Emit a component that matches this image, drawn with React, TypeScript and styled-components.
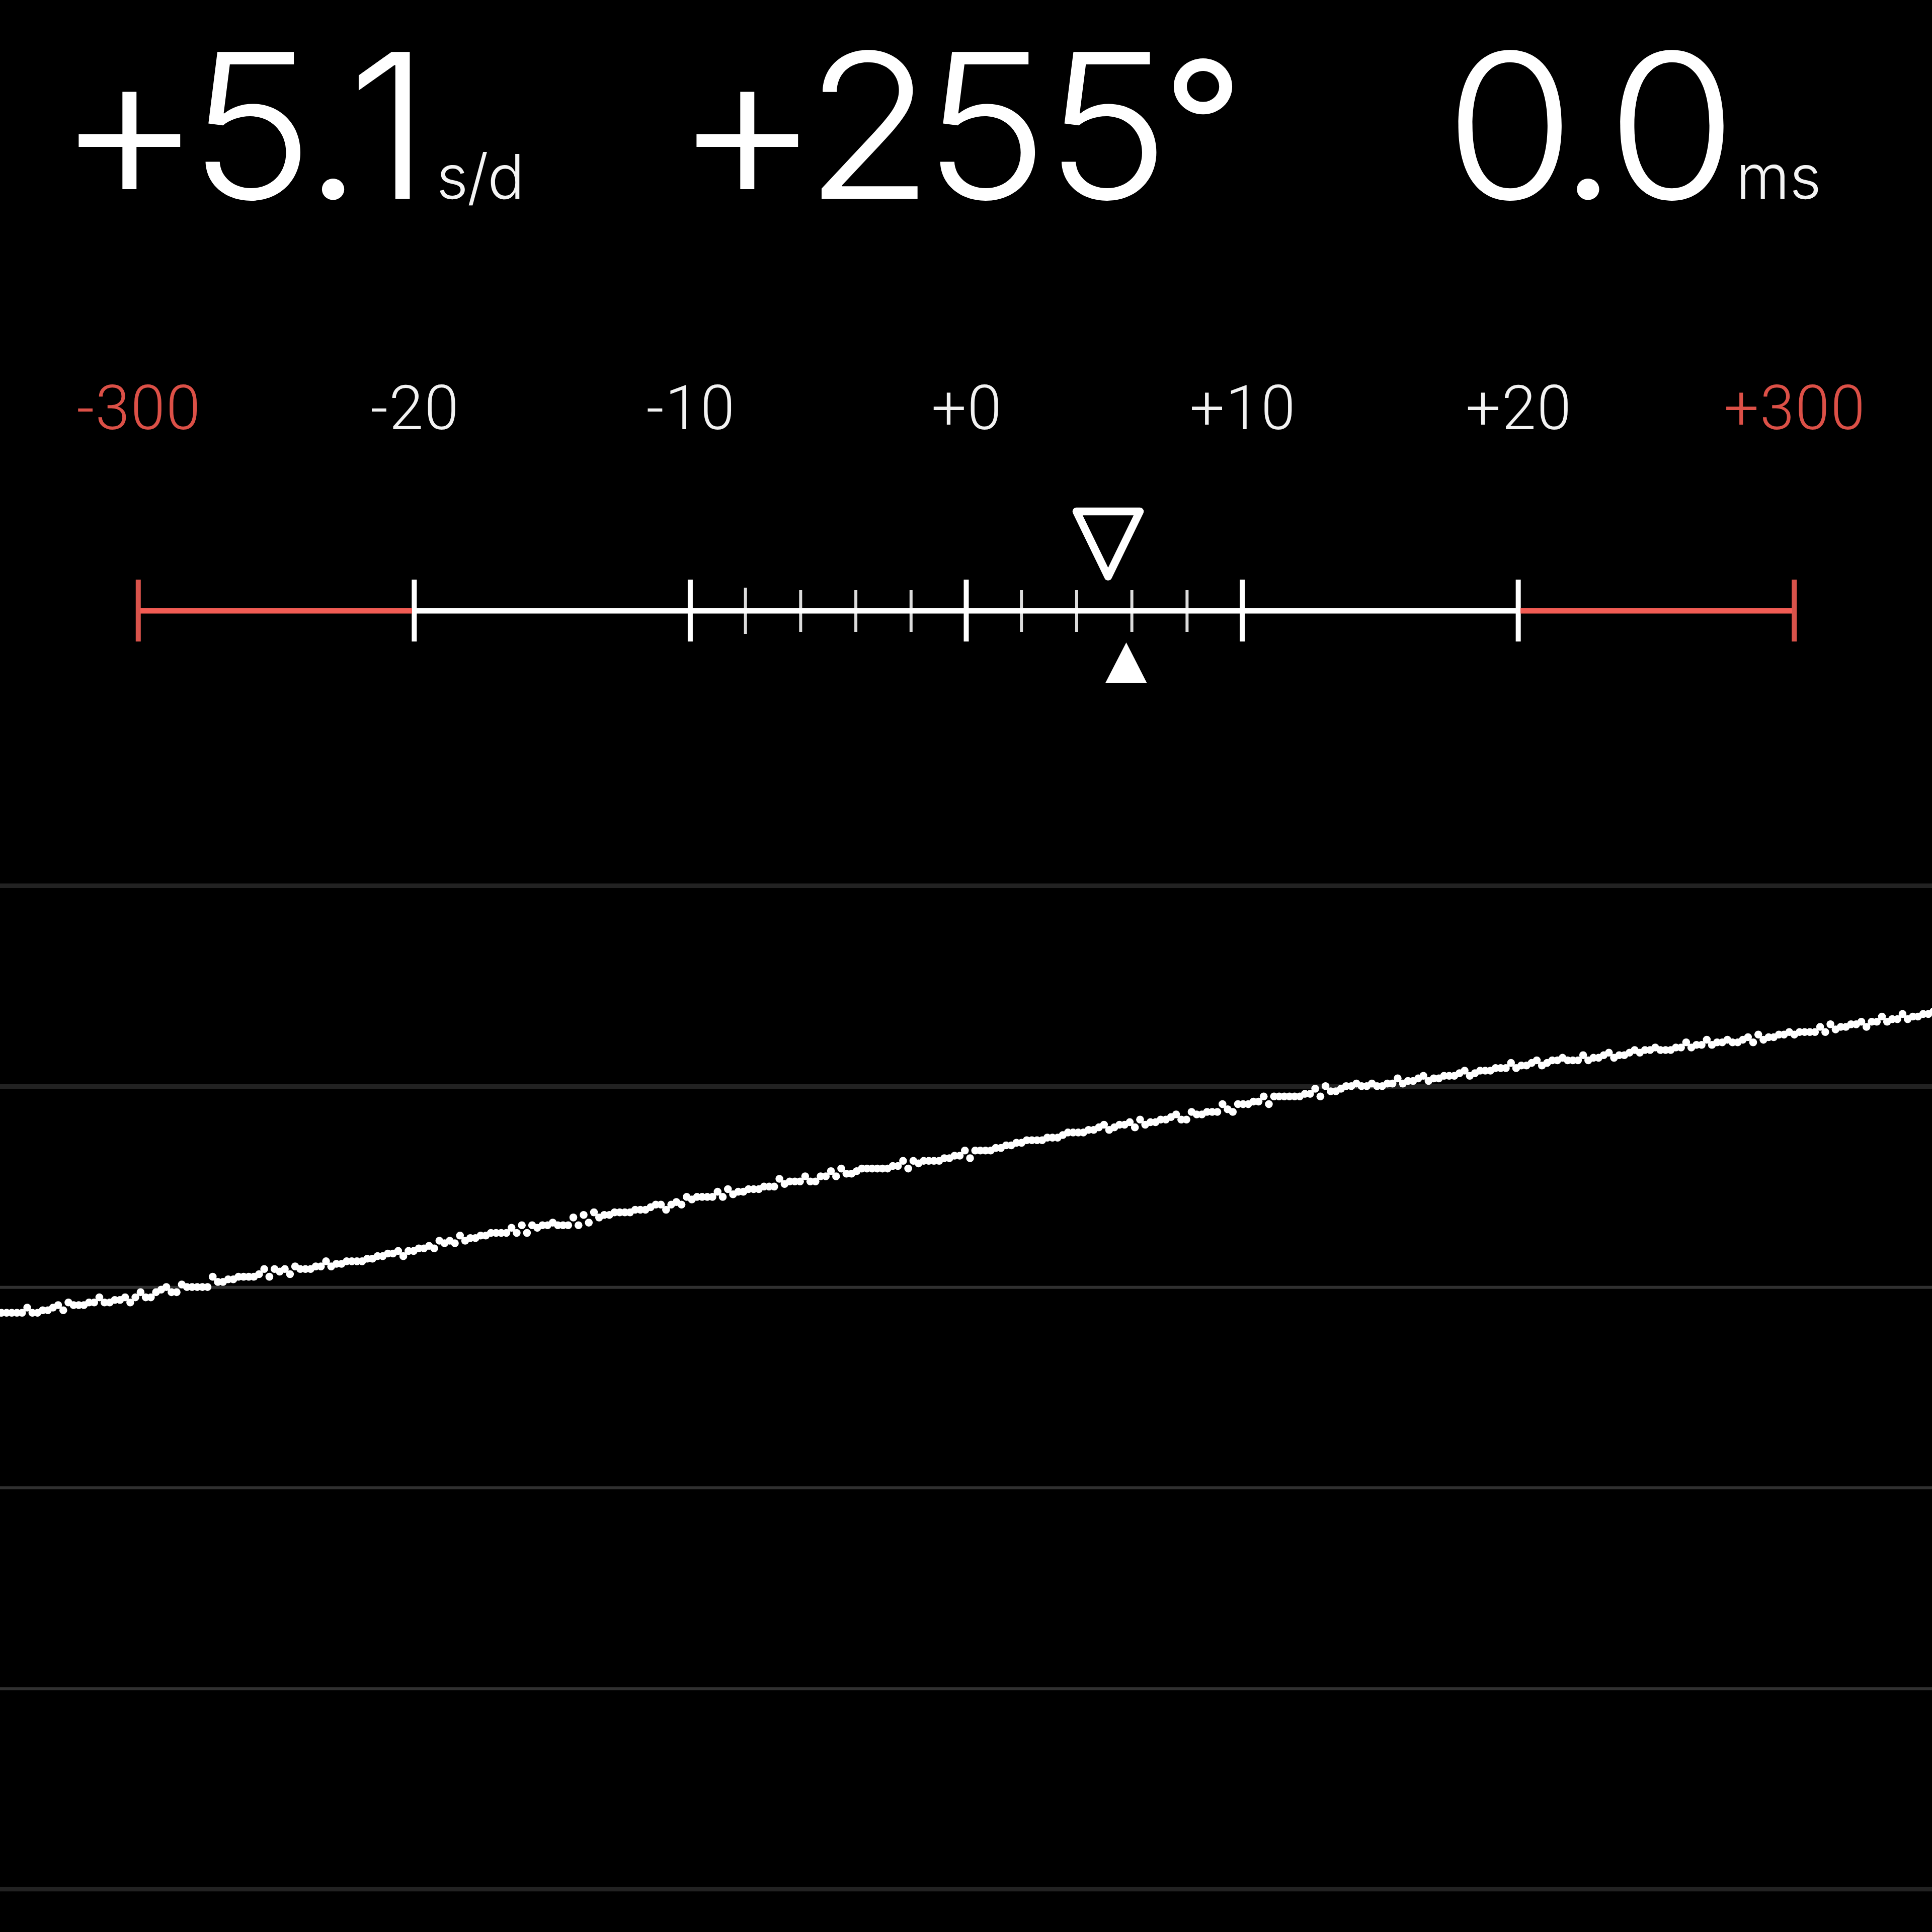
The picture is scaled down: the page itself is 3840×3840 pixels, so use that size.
import React from "react";
import styled, { createGlobalStyle } from "styled-components";

const GlobalStyle = createGlobalStyle`
  html, body { margin: 0; padding: 0; background: #000; }
`;

const Screen = styled.main`
  width: 3840px;
  height: 3840px;
  display: flex;
  flex-direction: column;
  overflow: hidden;
  background: #000;
  color: #fff;
  font-family: Inter, "Liberation Sans", sans-serif;
`;

const Readings = styled.header`
  display: grid;
  grid-template-columns: 1228px 1495px 1fr;
  height: 540px;
  padding: 50px 0 0 130px;
  box-sizing: border-box;
`;

const Reading = styled.div`
  display: flex;
  align-items: baseline;
  line-height: 400px;
  white-space: nowrap;
`;

const Value = styled.div`
  font-size: 401px;
  font-weight: 300;
  font-kerning: none;
  font-feature-settings: "calt" 0;
  transform: scaleX(1.045);
  transform-origin: left center;
`;

const Glyph = styled.span<{ $gap: number; $size: number; $raise: number; $weight: number }>`
  margin-left: ${(p) => p.$gap}px;
  font-size: ${(p) => p.$size}px;
  font-weight: ${(p) => p.$weight};
  line-height: 0;
  vertical-align: ${(p) => p.$raise}px;
`;

const Unit = styled.span<{ $gap: number; $spacing: number }>`
  margin-left: ${(p) => p.$gap}px;
  font-size: 122px;
  font-weight: 325;
  letter-spacing: ${(p) => p.$spacing}px;
  color: #f4f4f4;
`;

const Labels = styled.div`
  display: grid;
  grid-template-columns: repeat(7, 1fr);
  height: 460px;
  padding-top: 201px;
  box-sizing: border-box;
`;

const Label = styled.span<{ $limit?: boolean }>`
  padding-left: 4px;
  font-family: Roboto, "Liberation Sans", sans-serif;
  font-size: 123px;
  font-weight: 300;
  letter-spacing: 2px;
  line-height: 140px;
  text-align: center;
  color: ${(p) => (p.$limit ? "#dc5047" : "#f2f2f2")};
`;

const Drawing = styled.svg`
  display: block;
  flex: none;
`;

const labels = ["-300", "-20", "-10", "+0", "+10", "+20", "+300"];
const STEP = 3840 / 7;
const majors = labels.map((_, i) => STEP * (i + 0.5));
const minors = [-8, -6, -4, -2, 2, 4, 6, 8];

const SAMPLES = [
  0, 0, 0, 0, 0, 2, 0, 0, 1, 1, 2, 3, 1, 4, 3, 3, 3, 4, 4, 6, 4, 4, 5, 5, 6, 4, 6, 8, 6, 6, 8, 9, 10, 8, 8, 11, 10,
  10, 10, 10, 10, 14, 12, 12, 13, 13, 14, 14, 14, 14, 15, 17, 14, 17, 16, 17, 15, 18, 17, 17, 17, 18, 18, 20, 18, 19,
  19, 20, 20, 20, 20, 21, 21, 22, 22, 23, 23, 24, 22, 24, 24, 25, 25, 26, 25, 28, 27, 28, 27, 30, 28, 29, 29, 30,
  30, 31, 31, 31, 31, 33, 31, 34, 31, 34, 33, 34, 34, 35, 34, 34, 34, 37, 34, 38, 35, 39, 37, 38, 38, 39, 39, 39, 39,
  40, 40, 40, 41, 42, 42, 40, 42, 43, 42, 45, 44, 45, 45, 45, 45, 47, 45, 48, 46, 47, 47, 48, 48, 48, 49, 49, 49, 52,
  50, 51, 51, 51, 53, 51, 51, 53, 53, 55, 53, 56, 54, 54, 55, 56, 56, 56, 56, 56, 56, 57, 57, 59, 56, 59, 58, 59, 59,
  59, 59, 60, 60, 61, 61, 63,
  60, 63, 63, 63, 63, 64, 64, 65, 65, 66, 66, 67, 67, 67, 67, 68, 68, 68, 69, 70, 70, 70, 70, 71, 71, 72, 73, 71, 72,
  73, 73, 74, 72, 75, 73, 74, 74, 75, 75, 76, 77, 75, 75, 78, 77, 77, 78, 78, 78, 81, 79, 78, 81, 81, 81, 82, 82, 84,
  81, 84, 84, 84, 84, 84, 84, 85, 85, 87, 84, 88, 86, 86, 87, 88, 88, 89, 88, 88, 89, 88, 88, 89, 89, 91, 89, 90, 90,
  91, 92, 90, 91, 91, 92,
  92, 92, 93, 94, 92, 93, 94, 94, 94, 95, 95, 95, 97, 95, 96, 96, 97, 98, 96, 97, 98, 98, 99, 98, 98, 98, 100, 98, 99,
  99, 100, 101, 99, 100, 100, 101, 102, 101, 102, 102, 103, 102, 102, 102, 103, 103, 105, 103, 104, 104, 106, 104, 105,
  105, 106, 105, 105, 106, 107, 105, 108, 106, 107, 107, 108, 108, 109, 108, 109, 109, 109, 109, 111, 109, 112, 110,
  111, 111, 112, 112, 113, 111, 113, 113, 115, 113, 114, 114, 116, 114, 115, 115, 116, 116, 117,
];

const UNIT = 5.12;
const gridLines = [
  { y: 360.5, soft: true },
  { y: 759.5, soft: true },
  { y: 1158.7, soft: false },
  { y: 1557.2, soft: false },
  { y: 1956.3, soft: false },
  { y: 2354.8, soft: true },
];

type Shape = { size: number; raise: number; weight: number };
const plain: Shape = { size: 401, raise: 0, weight: 325 };
const shapes: Record<string, Shape> = {
  "+": { size: 428, raise: -6, weight: 325 },
  "°": { size: 338, raise: 31, weight: 380 },
};

function Figures({ text, gaps }: { text: string; gaps: number[] }) {
  return (
    <Value>
      {[...text].map((ch, i) => {
        const s = shapes[ch] ?? plain;
        return (
          <Glyph key={i} $gap={gaps[i] ?? 0} $size={s.size} $raise={s.raise} $weight={s.weight}>
            {ch}
          </Glyph>
        );
      })}
    </Value>
  );
}

function Scale() {
  return (
    <Drawing width={3840} height={400} viewBox="0 1000 3840 400">
      {majors.map((x, i) => (
        <rect key={x} x={x - 4.5} y={1152} width={10} height={123} fill={i === 0 || i === 6 ? "#d9534b" : "#fff"} />
      ))}
      {minors.map((m) => (
        <rect
          key={m}
          x={1920 + (m * STEP) / 10 - 2.5}
          y={m === -8 ? 1168 : 1173}
          width={6}
          height={m === -8 ? 92 : 83}
          fill="#dcdcdc"
        />
      ))}
      <rect x={279} y={1208.5} width={540} height={11} fill="#f25c54" />
      <rect x={3022} y={1208.5} width={540} height={11} fill="#f25c54" />
      <rect x={819} y={1208.5} width={2202} height={11} fill="#fff" />
      <path d="M2139.500 1016.500H2265.500L2202.500 1146Z" fill="none" stroke="#fff" strokeWidth={15.5} strokeLinejoin="round" />
      <path d="M2238.500 1277L2279.500 1357.500H2197Z" fill="#fff" />
    </Drawing>
  );
}

function Trace() {
  return (
    <Drawing width={3840} height={2440} viewBox="0 0 3840 2440">
      {gridLines.map((g) => {
        const h = g.soft ? 9 : 6;
        return <rect key={g.y} x={0} y={g.y - h / 2} width={3840} height={h} fill={g.soft ? "#222" : "#303030"} />;
      })}
      <circle cx={-7.3} cy={1214.4} r={7.7} fill="#fff" />
      {SAMPLES.map((n, i) => (
        <circle key={i} cx={2.9 + i * 2 * UNIT} cy={1209.3 - n * UNIT} r={7.8} fill="#fff" />
      ))}
    </Drawing>
  );
}

export default function App() {
  return (
    <Screen>
      <GlobalStyle />
      <Readings>
        <Reading>
          <Figures text="+5.1" gaps={[-18, -27, -20, -30]} />
          <Unit $gap={44} $spacing={-2}>
            s/d
          </Unit>
        </Reading>
        <Reading>
          <Figures text="+255°" gaps={[-18, -31, -20, -7, -14]} />
        </Reading>
        <Reading>
          <Figures text="0.0" gaps={[18, -32, -21]} />
          <Unit $gap={24} $spacing={0}>
            ms
          </Unit>
        </Reading>
      </Readings>
      <Labels>
        {labels.map((t, i) => (
          <Label key={t} $limit={i === 0 || i === 6}>
            {t}
          </Label>
        ))}
      </Labels>
      <Scale />
      <Trace />
    </Screen>
  );
}
